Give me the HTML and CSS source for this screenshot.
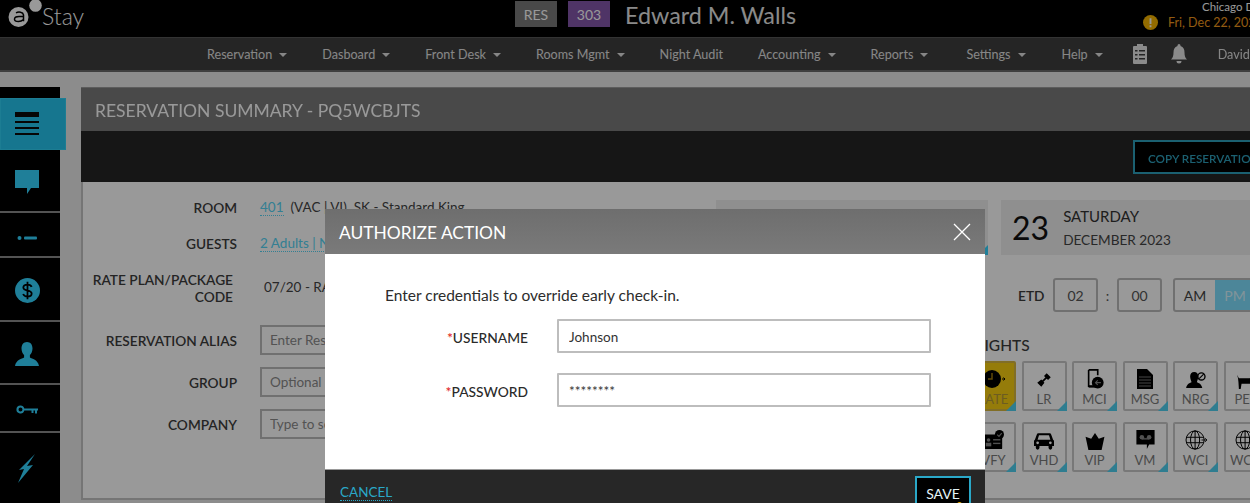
FILE: index.html
```html
<!DOCTYPE html>
<html lang="en">
<head>
<meta charset="utf-8">
<title>Reservation Summary</title>
<link rel="stylesheet" href="styles.css">
</head>
<body>
<div class="app">
  <header class="topbar">
    <div class="logo">
      <svg class="logo-mark" viewBox="0 0 42 30" width="42" height="30"><circle cx="18.500" cy="17" r="10" fill="#fff"/><path d="M16 12.800c2.500-1.300 7-1 7.500 2v6.500M23.500 16.500h-4.500c-3 0-4.500 1.200-4.500 2.700s1.700 2.300 4 2.300 3.500-.6 5-2" fill="none" stroke="#000" stroke-width="1.500"/><circle cx="35.500" cy="5.500" r="6.300" fill="#fff"/></svg>
      <span class="logo-text">Stay</span>
    </div>
    <div class="guest">
      <span class="chip chip-res">RES</span>
      <span class="chip chip-room">303</span>
      <span class="guest-name">Edward M. Walls</span>
    </div>
    <div class="site">
      <div class="site-name">Chicago Downtown</div>
      <div class="site-date">
        <svg class="alert" viewBox="0 0 16 16" width="15" height="15"><circle cx="8" cy="8" r="8" fill="#f5b400"/><path d="M8 3.500v6M8 11v2" stroke="#fff" stroke-width="2"/></svg>
        <span>Fri, Dec 22, 2023</span>
      </div>
    </div>
  </header>
  <nav class="nav">
    <span class="nav-item caret">Reservation</span>
    <span class="nav-item caret">Dasboard</span>
    <span class="nav-item caret">Front Desk</span>
    <span class="nav-item caret">Rooms Mgmt</span>
    <span class="nav-item">Night Audit</span>
    <span class="nav-item caret">Accounting</span>
    <span class="nav-item caret">Reports</span>
    <span class="nav-item caret nav-settings">Settings</span>
    <span class="nav-item caret nav-help">Help</span>
    <svg class="nav-icon clip" viewBox="0 0 16 20" width="16" height="20"><path fill-rule="evenodd" d="M2 2h3V0h6v2h3a1 1 0 0 1 1 1v16a1 1 0 0 1-1 1H2a1 1 0 0 1-1-1V3a1 1 0 0 1 1-1zM3 6v1.500h2.500V6zM7 6v1.500h6V6zM3 10v1.500h2.500V10zM7 10v1.500h6V10zM3 14v1.500h2.500V14zM7 14v1.500h6V14z" fill="#e6e6e6"/></svg>
    <svg class="nav-icon bell" viewBox="0 0 16 20" width="16" height="20"><path d="M8 0a1.500 1.500 0 0 1 1.500 1.500v.6C12.500 3 13.500 5.500 13.500 8.500c0 3.500.8 5.500 2.500 7H0c1.700-1.500 2.500-3.500 2.500-7 0-3 1-5.500 4-6.400v-.6A1.500 1.500 0 0 1 8 0zM5.500 17h5a2.500 2.500 0 0 1-5 0z" fill="#e6e6e6"/></svg>
    <span class="nav-item user">David Miller</span>
  </nav>
  <main class="main">
    <aside class="sidebar">
      <div class="side-item side-active"><svg viewBox="0 0 24 24" width="24" height="24"><path d="M0 0h24v5H0zM0 9h24v2H0zM0 15h24v2H0zM0 21h24v2H0z" fill="#0a0a0a"/></svg></div>
      <div class="side-item side-chat"><svg viewBox="0 0 24 24" width="24" height="24"><path d="M0 0h24v18h-8l-4 6v-6H0z" class="si"/></svg></div>
      <div class="side-item side-dash"><svg viewBox="0 0 20 6" width="20" height="6"><circle cx="2.500" cy="3" r="2" class="si"/><rect x="7" y="1.500" width="13" height="3" rx="1" class="si"/></svg></div>
      <div class="side-item side-dollar"><svg viewBox="0 0 24 24" width="25" height="25"><circle cx="12" cy="12" r="12" class="si"/><path d="M16 8.500c-.5-1.500-2-2.200-4-2.200-2.500 0-4 1.200-4 2.900 0 4 8 1.800 8 5.600 0 1.700-1.600 2.900-4 2.900-2.200 0-3.600-.8-4.200-2.400M12 3.500v17" fill="none" stroke="#000" stroke-width="1.700"/></svg></div>
      <div class="side-item side-user"><svg viewBox="0 0 24 24" width="24" height="24"><path d="M12 0c3.500 0 5.500 2.800 5.500 6.500 0 3-1.300 5.200-2.600 6.600v2.400c2 1.200 8.100 2.200 9.100 8.500H0c1-6.300 7.100-7.300 9.100-8.500v-2.400C7.800 11.700 6.500 9.500 6.500 6.500 6.500 2.800 8.500 0 12 0z" class="si"/></svg></div>
      <div class="side-item side-key"><svg viewBox="0 0 22 10" width="22" height="10"><path fill-rule="evenodd" d="M4.500 0.500a4 4 0 0 1 3.800 3H22v2h-1v3h-2v-3h-1.500v2.500h-2V5.500H8.300a4 4 0 1 1-3.800-5zm0 2a2 2 0 1 0 0 4 2 2 0 0 0 0-4z" class="si"/></svg></div>
      <div class="side-item side-bolt"><svg viewBox="0 0 18 29" width="18" height="29"><path d="M17 0L9 12l6-1L0 29 6 15l-5 1z" class="si"/></svg></div>
    </aside>
    <section class="content">
      <h1 class="page-title">RESERVATION SUMMARY - PQ5WCBJTS</h1>
      <div class="action-band"><button class="copy-btn">COPY RESERVATION</button></div>
      <div class="panel">
        <div class="form-grid">
          <div class="lbl">ROOM</div><div class="val"><a class="link">401</a>&nbsp; (VAC | VI) &nbsp;SK - Standard King</div>
          <div class="lbl">GUESTS</div><div class="val"><a class="link">2 Adults | No Children</a></div>
          <div class="lbl lbl-rate">RATE PLAN/PACKAGE CODE</div><div class="val val-rate">07/20 - RACK RATE</div>
          <div class="lbl lbl-alias">RESERVATION ALIAS</div><input class="field" placeholder="Enter Reservation Alias">
          <div class="lbl">GROUP</div><input class="field" placeholder="Optional Group">
          <div class="lbl">COMPANY</div><input class="field" placeholder="Type to search">
        </div>
        <div class="side-col">
          <div class="dates">
            <div class="date-box date-summary"></div>
            <div class="date-box date-depart">
              <span class="date-day">23</span>
              <div class="date-text"><div class="date-week">SATURDAY</div><div class="date-month">DECEMBER 2023</div></div>
            </div>
          </div>
          <div class="etd">
            <span class="etd-label">ETD</span>
            <span class="time-box">02</span><span class="colon">:</span><span class="time-box">00</span>
            <div class="ampm"><span class="am">AM</span><span class="pm">PM</span></div>
          </div>
          <div class="hl-wrap">
            <h2 class="hl-title">HIGHLIGHTS</h2>
            <div class="tiles">
              <div class="tile tile-late"><svg viewBox="0 0 24 20" width="24" height="20"><circle cx="10" cy="10" r="9" fill="#000"/><path d="M10 4v6H6" stroke="#a27c0b" stroke-width="1.500" fill="none"/><path d="M20 10h3m-1.500-1.500L23 10l-1.500 1.500" stroke="#000" fill="none"/></svg><span>LATE</span></div>
              <div class="tile"><svg viewBox="0 0 20 20" width="18" height="18"><path d="M13 2.500l4.500 4.500-3 3L10 5.500zM7 9.500l3.500 3.500-3.500 4.500L2.500 13z" fill="#000"/><path d="M7 13l6-6" stroke="#000" stroke-width="2"/></svg><span>LR</span></div>
              <div class="tile"><svg viewBox="0 0 20 22" width="20" height="20"><path d="M3 1h10v6M3 1v18h7" fill="none" stroke="#000" stroke-width="1.800"/><rect x="3" y="18" width="8" height="2.500" fill="#000"/><circle cx="13" cy="15" r="6.500" fill="#000"/><path d="M16.500 15h-6m2.500-2.500L10.500 15l2.500 2.500" stroke="#888" fill="none" stroke-width="1.200"/></svg><span>MCI</span></div>
              <div class="tile"><svg viewBox="0 0 16 20" width="16" height="20"><path d="M0 0h10l6 6v14H0z" fill="#000"/><path d="M2 8h12M2 11h12M2 14h12M2 17h12" stroke="#777" stroke-width="1"/></svg><span>MSG</span></div>
              <div class="tile"><svg viewBox="0 0 22 20" width="22" height="18"><path d="M9 1c3 0 4.500 2 4.500 5S12 11 12 12.500c2 1 5 1.500 6 6.500H0c1-5 4-5.500 6-6.500C6 11 4.500 9 4.500 6S6 1 9 1z" fill="#000"/><circle cx="17" cy="6" r="4" fill="none" stroke="#000" stroke-width="1.500"/><path d="M14.500 8.500l5-5" stroke="#000" stroke-width="1.300"/></svg><span>NRG</span></div>
              <div class="tile"><svg viewBox="0 0 24 18" width="24" height="16"><path d="M2 2l2 4h12l3-3 1-3 1 3 2 1-2 2-2 4v8h-2v-6H7l-1 6H4l-.5-8L3 6z" fill="#000"/></svg><span>PET</span></div>
              <div class="tile"><svg viewBox="0 0 24 22" width="22" height="20"><rect x="1" y="5" width="20" height="16" rx="1" fill="#000"/><rect x="11" y="10" width="8" height="1.500" fill="#888"/><rect x="11" y="14" width="8" height="1.500" fill="#888"/><circle cx="6" cy="11" r="2" fill="#888"/><rect x="3" y="14" width="6" height="4" fill="#888"/><circle cx="18" cy="5" r="5" fill="#000"/><path d="M15.500 5l2 2 3-3.500" stroke="#888" fill="none" stroke-width="1.300"/></svg><span>VFY</span></div>
              <div class="tile"><svg viewBox="0 0 22 18" width="20" height="17"><path fill-rule="evenodd" d="M5 0h12a2 2 0 0 1 2 1.500L21 7a2 2 0 0 1 1 2v5h-2v2a2 2 0 0 1-4 0v-2H6v2a2 2 0 0 1-4 0v-2H0V9a2 2 0 0 1 1-2l2-5.500A2 2 0 0 1 5 0zm.5 2L4 7h14l-1.500-5zM4 9a1.500 1.500 0 1 0 0 3 1.500 1.500 0 0 0 0-3zm14 0a1.500 1.500 0 1 0 0 3 1.500 1.500 0 0 0 0-3z" fill="#000"/></svg><span>VHD</span></div>
              <div class="tile"><svg viewBox="0 0 20 18" width="20" height="17"><path d="M10 0l4 6 6-2-3 14H3L0 4l6 2z" fill="#000"/></svg><span>VIP</span></div>
              <div class="tile"><svg viewBox="0 0 20 22" width="19" height="20"><path d="M0 0h20v16h-6l-2.500 5V16H0z" fill="#000"/><circle cx="6" cy="8" r="2.500" fill="#888"/><circle cx="14" cy="8" r="2.500" fill="#888"/><rect x="6" y="9" width="8" height="1.500" fill="#888"/></svg><span>VM</span></div>
              <div class="tile"><svg viewBox="0 0 24 22" width="22" height="20"><g fill="none" stroke="#000" stroke-width="1.100"><circle cx="11" cy="11" r="10"/><ellipse cx="11" cy="11" rx="5" ry="10"/><path d="M11 1v20M1.500 8h19M1.500 14h19"/><path d="M18 11h6m-2-2l2 2-2 2" stroke-width="1"/></g></svg><span>WCI</span></div>
              <div class="tile"><svg viewBox="0 0 24 22" width="22" height="20"><g fill="none" stroke="#000" stroke-width="1.100"><circle cx="11" cy="11" r="10"/><ellipse cx="11" cy="11" rx="5" ry="10"/><path d="M11 1v20M1.500 8h19M1.500 14h19"/></g></svg><span>WCO</span></div>
            </div>
          </div>
        </div>
      </div>
    </section>
  </main>
</div>
<div class="scrim"></div>
<div class="modal">
  <div class="modal-head">
    <span class="modal-title">AUTHORIZE ACTION</span>
    <svg class="modal-close" viewBox="0 0 18 18" width="18" height="18"><path d="M1 1l16 16M17 1L1 17" stroke="#fff" stroke-width="1.300"/></svg>
  </div>
  <div class="modal-body">
    <p class="modal-msg">Enter credentials to override early check-in.</p>
    <div class="cred-grid">
      <label class="cred-label"><span class="req">*</span>USERNAME</label>
      <input class="cred-input" value="Johnson">
      <label class="cred-label"><span class="req">*</span>PASSWORD</label>
      <input class="cred-input" value="********">
    </div>
  </div>
  <div class="modal-foot">
    <a class="cancel">CANCEL</a>
    <button class="save">SAVE</button>
  </div>
</div>
</body>
</html>
```
FILE: styles.css
```css
* { box-sizing: border-box; }
html, body { margin: 0; height: 503px; overflow: hidden; }
body { font-family: Lato, "Open Sans", sans-serif; background: #e9e9e9; position: relative; width: 1250px; filter: blur(0.5px); }
.app { width: 1250px; height: 503px; overflow: hidden; display: flex; flex-direction: column; }

.topbar { height: 37px; background: #000; display: flex; flex: none; position: relative; }
.logo { display: flex; align-items: flex-start; width: 515px; flex: none; }
.logo-mark { flex: none; }
.logo-text { font-size: 23px; font-weight: 300; color: #fff; line-height: 33px; }
.guest { display: flex; align-items: flex-start; padding-top: 1px; }
.chip { width: 42px; height: 26px; display: flex; align-items: center; justify-content: center; font-size: 14px; color: #fff; }
.chip-res { background: #7b7b7b; margin-right: 11px; }
.chip-room { background: #8457ab; margin-right: 15px; }
.guest-name { font-size: 23.300px; color: #e6e6e6; line-height: 28px; white-space: nowrap; }
.site { margin-left: auto; width: 107px; flex: none; white-space: nowrap; overflow: hidden; }
.site-name { font-size: 11.500px; color: #fff; line-height: 13px; padding-left: 59px; }
.site-date { display: flex; align-items: center; font-size: 12.500px; color: #f29a1e; margin-top: 2px; gap: 10px; }
.alert { flex: none; }

.nav { height: 35px; flex: none; background: #3e3e3e; border-top: 1px solid #555; border-bottom: 2px solid #6a6a6a; display: flex; align-items: center; padding-left: 207px; gap: 35px; white-space: nowrap; }
.nav-item { font-size: 12.600px; color: #e0e0e0; flex: none; padding-top: 1px; }
.caret::after { content: ""; display: inline-block; border: 4px solid transparent; border-top-color: #e0e0e0; border-bottom: 0; margin-left: 7px; vertical-align: 2px; }
.nav-settings { margin-left: 3px; }
.nav-help { margin-left: 1px; }
.nav-icon { flex: none; }
.clip { margin-left: -6px; }
.bell { margin-left: -12px; }
.user { margin-left: -4px; }

.main { flex: 1; display: flex; padding-top: 15px; min-height: 0; }
.sidebar { width: 60px; flex: none; background: #000; padding-top: 11px; display: flex; flex-direction: column; position: relative; }
.side-item { display: flex; align-items: center; justify-content: center; border-bottom: 2px solid #8a8a8a; padding-right: 6px; flex: none; }
.side-active { width: 66px; height: 52px; background: #26c5ee; border: 1px solid #2fd0f5; padding-right: 12px; }
.side-chat { height: 63px; padding-top: 3px; }
.side-dash { height: 45px; padding-top: 7px; }
.side-dollar { height: 64px; padding-top: 2px; }
.side-user { height: 63px; padding-top: 2px; }
.side-key { height: 48px; padding-top: 4px; }
.side-bolt { height: 69px; border-bottom: 0; padding-top: 2px; }
.si { fill: #34d4ff; }

.content { flex: 1; margin-left: 21px; min-width: 0; display: flex; flex-direction: column; }
.page-title { margin: 0; height: 44px; flex: none; background: #7b7b7b; border-top: 1px solid #999; color: #fff; font-size: 17.500px; font-weight: 400; line-height: 45px; padding-left: 14px; }
.action-band { height: 51px; flex: none; background: #262626; display: flex; align-items: center; padding-left: 1052px; }
.copy-btn { flex: none; width: 180px; height: 34px; background: #000; border: 2px solid #2ea0bd; color: #2ea0bd; font: 600 11.700px Lato, sans-serif; text-align: left; padding: 2px 0 0 13px; white-space: nowrap; }
.panel { height: 318px; flex: none; background: #fff; border-left: 2px solid #c4c4c4; border-bottom: 2px solid #c4c4c4; display: flex; position: relative; }

.form-grid { width: 633px; flex: none; display: grid; grid-template-columns: 154px 456px; column-gap: 23px; grid-template-rows: 24px 24px 39px 37px 30px 30px; row-gap: 12px; padding-top: 13px; align-items: center; align-content: start; }
.lbl { text-align: right; font-size: 13.700px; font-weight: 600; color: #3c3c3c; line-height: 17px; white-space: nowrap; }
.lbl-rate { white-space: normal; padding-right: 4px; margin-top: 2px; }
.lbl-alias { margin-top: 7px; }
.val { font-size: 13.500px; color: #444; white-space: nowrap; }
.val-rate { padding-left: 4px; }
.link { color: #55d4f5; border-bottom: 1px dotted #55d4f5; }
.field { height: 30px; width: 100%; align-self: end; border: 2px solid #bbb; background: #fff; padding: 0 8px; font: 13.500px Lato, sans-serif; color: #444; }
.field::placeholder { color: #8a8a8a; opacity: 1; }

.side-col { flex: none; width: 535px; padding-top: 18px; }
.dates { display: flex; gap: 13px; }
.date-box { height: 55px; background: #eee; }
.date-summary { width: 272px; position: relative; }
.date-summary::after { content: ""; position: absolute; right: 0; bottom: 0; border: 5px solid transparent; border-right-color: #34d4ff; border-bottom-color: #34d4ff; }
.date-depart { flex: 1; display: flex; align-items: center; padding-left: 11px; }
.date-day { font-size: 32px; font-weight: 400; color: #111; line-height: 1; }
.date-text { margin-left: 14px; }
.date-week { font-size: 15px; color: #333; line-height: 20px; }
.date-month { font-size: 13.600px; color: #444; line-height: 20px; margin-top: 4px; }

.etd { display: flex; align-items: center; margin: 23px 0 0 302px; }
.etd-label { font-size: 13.700px; font-weight: 600; color: #3c3c3c; width: 35px; flex: none; }
.time-box { width: 45px; height: 34px; flex: none; border: 2px solid #bbb; border-radius: 3px; display: flex; align-items: center; justify-content: center; font-size: 14px; color: #555; }
.colon { width: 19px; flex: none; text-align: center; color: #555; font-size: 14px; }
.ampm { display: flex; height: 34px; flex: none; margin-left: 11px; border: 2px solid #bbb; border-radius: 3px; overflow: hidden; }
.am, .pm { width: 40px; display: flex; align-items: center; justify-content: center; font-size: 14px; }
.am { color: #444; }
.pm { background: #7fe0ff; color: #d8f6ff; }

.hl-wrap { margin: 24px 0 0 255px; }
.hl-title { margin: 0 0 7px -34px; font-size: 15.500px; font-weight: 500; line-height: 18px; color: #3c3c3c; }
.tiles { display: grid; grid-template-columns: repeat(6, 45px); column-gap: 5.500px; row-gap: 11px; }
.tile { height: 50px; border: 2px solid #c8c8c8; border-radius: 2px; display: flex; flex-direction: column; align-items: center; justify-content: flex-end; font-size: 13px; line-height: 18px; color: #7b7b7b; position: relative; padding-bottom: 1px; }
.tile::after { content: ""; position: absolute; right: -2px; bottom: -2px; border: 5.500px solid transparent; border-right-color: #4fd0f0; border-bottom-color: #4fd0f0; }
.tile svg { margin-bottom: 1px; }
.tile-late { background: #f8cf12; color: #b59a3a; border-color: #d8b840; }

.scrim { position: absolute; inset: 0; background: rgba(0, 0, 0, 0.4); }

.modal { position: absolute; left: 325px; top: 209px; width: 660px; height: 310px; display: flex; flex-direction: column; }
.modal-head { height: 45px; flex: none; background: linear-gradient(#6e6e6e, #7a7a7a); display: flex; align-items: center; justify-content: space-between; padding: 0 14px; }
.modal-title { color: #fff; font-size: 17.400px; padding-top: 1px; }
.modal-close { flex: none; }
.modal-body { height: 216px; flex: none; background: #fff; padding: 31px 0 0 60px; border-bottom: 1px solid #999; }
.modal-msg { margin: 0; font-size: 15.500px; line-height: 20px; color: #2c2c2c; }
.cred-grid { display: grid; grid-template-columns: 143px 374px; column-gap: 29px; row-gap: 20px; margin-top: 14px; align-items: center; }
.cred-label { text-align: right; font-size: 13.800px; font-weight: 500; color: #2a2a2a; padding-top: 2px; }
.req { color: #e02020; font-size: 14px; }
.cred-input { height: 34px; width: 100%; border: 2px solid #bdbdbd; border-radius: 1px; padding: 2px 10px 0; font: 13.500px Lato, sans-serif; color: #333; background: #fff; }
.modal-foot { flex: 1; background: #272727; display: flex; justify-content: space-between; padding: 6px 14px 0 15px; align-items: flex-start; }
.cancel { color: #2aa8c8; font-size: 13.500px; border-bottom: 1px dotted #2aa8c8; margin-top: 8px; }
.save { width: 56px; height: 34px; background: #000; border: 2px solid #2aa8c8; color: #e4f4f8; font: 14px Lato, sans-serif; padding: 0; position: relative; }
.save::after { content: ""; position: absolute; left: 40px; top: 24px; width: 5px; height: 5px; border-radius: 50%; background: #f0b400; }
```
